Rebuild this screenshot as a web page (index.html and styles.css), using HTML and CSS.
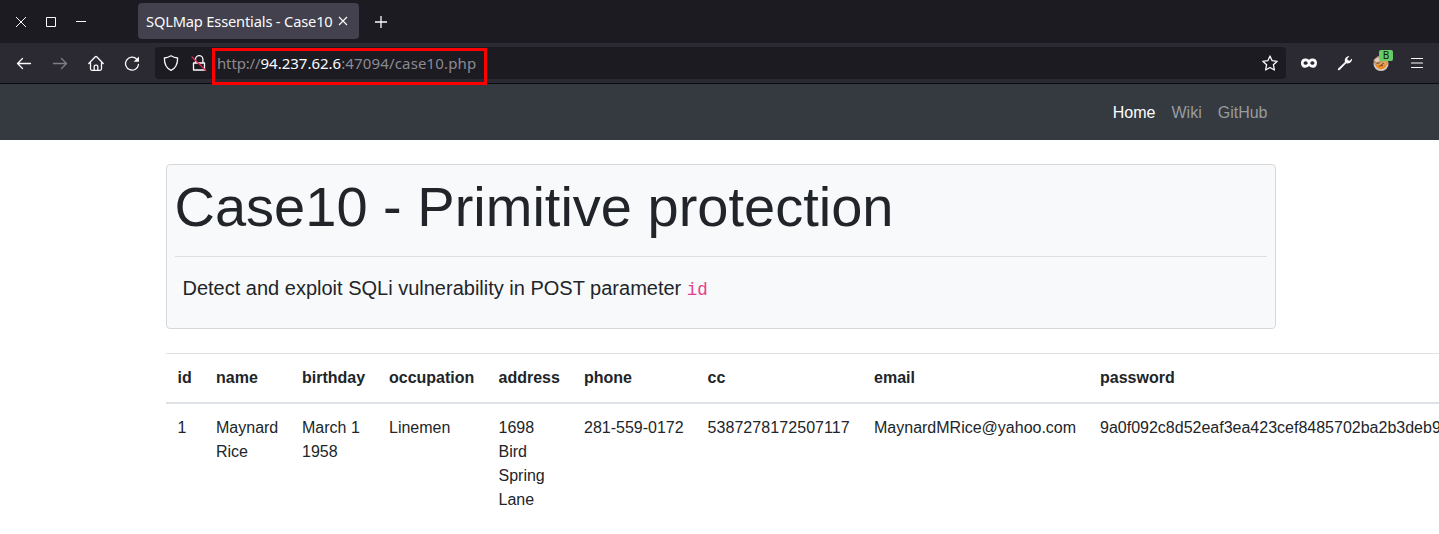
FILE: index.html
```html
<!DOCTYPE html>
<html lang="en">
<head>
<meta charset="utf-8">
<title>SQLMap Essentials - Case10</title>
<link rel="stylesheet" href="styles.css">
</head>
<body>
<header class="browser">
  <div class="titlebar">
    <div class="window-controls">
      <svg class="win-icon" viewBox="0 0 30 30"><path d="M10 10l10 10M20 10L10 20"/></svg>
      <svg class="win-icon" viewBox="0 0 30 30"><path d="M10.500 10.500h9v9h-9z"/></svg>
      <svg class="win-icon" viewBox="0 0 30 30"><path d="M10 14.500h10"/></svg>
    </div>
    <div class="tab">
      <span class="tab-title">SQLMap Essentials - Case10</span>
      <svg class="tab-close" viewBox="0 0 12 12"><path d="M2 2l8 8M10 2L2 10"/></svg>
    </div>
    <svg class="new-tab" viewBox="0 0 16 16"><path d="M8 2v12M2 8h12"/></svg>
  </div>
  <div class="toolbar">
    <div class="button"><svg class="icon" viewBox="0 0 16 16"><path d="M14.500 8.500H1.500M6.500 3.500l-5 5 5 5"/></svg></div>
    <div class="button dim"><svg class="icon" viewBox="0 0 16 16"><path d="M1.500 8.500h13M9.500 3.500l5 5-5 5"/></svg></div>
    <div class="button"><svg class="icon" viewBox="0 0 16 16"><path d="M.8 8.500L7.300 1.800q.7-.6 1.400 0L15.200 8.500M2.500 7.500v6.300q0 1.500 1.500 1.500h8q1.500 0 1.500-1.500V7.500M6.200 15.300v-4q0-1.200 1.200-1.200h1.200q1.200 0 1.200 1.200v4"/></svg></div>
    <div class="button"><svg class="icon" viewBox="0 0 16 16"><path d="M12.800 4.200A6.500 6.500 0 1 0 14.500 9.500"/><path class="solid" d="M15 1.500v5.300H9.700z"/></svg></div>
    <div class="urlbar">
      <div class="url-button"><svg class="icon" viewBox="0 0 16 16"><path d="M8 .8c2 1.300 4 2 6.600 2.200C14.700 8.500 13.500 12.800 8 15.300 2.500 12.800 1.300 8.500 1.400 3 4 2.800 6 2.100 8 .8z"/></svg></div>
      <div class="url-button"><svg class="icon" viewBox="0 0 16 16"><path d="M4.500 7.500V4.300a3.700 3.700 0 0 1 7.400 0v3.200M2.500 8h11v7h-11z"/><path class="strike" d="M1 2l13.800 13.500"/></svg></div>
      <div class="address"><span class="faint scheme">http://</span>94.237.62.6<span class="faint path">:47094/case10.php</span><span class="highlight"></span></div>
      <svg class="icon star" viewBox="0 0 16 16"><path d="M8 1l2.100 4.700 5.100.6-3.800 3.500 1 5.200L8 12.500 3.600 15l1-5.200L.8 6.300l5.100-.6z"/></svg>
    </div>
    <div class="button"><svg class="icon" viewBox="0 0 16 16"><path class="solid" fill-rule="evenodd" d="M0 7.800C0 3 5 2.500 8 4.800c3-2.300 8-1.800 8 3 0 6-5.300 6-8 3.300-2.700 2.700-8 2.700-8-3.300zm2.500.2c.5 2.300 3 2.300 4.300.2-1-2.400-3.300-2.400-4.300-.2zm6.700.2c1.300 2.100 3.800 2.100 4.300-.2-1-2.200-3.300-2.200-4.300.2z"/></svg></div>
    <div class="button"><svg class="icon" viewBox="0 0 16 16"><path class="solid" d="M1 13.700L8 7C7 3.500 9.500.8 12.500 1.200L10.300 3.500l.5 1.800 1.900.5 2.300-2.200c.4 3-2.200 5.600-5.800 4.600L2.600 15.100Q1.800 15.500 1.200 15 .6 14.400 1 13.700z"/></svg></div>
    <div class="button">
      <svg class="icon" viewBox="0 0 16 16"><circle cx="8" cy="8.500" r="7" fill="#e1a05a" stroke="#b8a28f"/><path fill="#f18a22" stroke="none" d="M2 9q6 3 12 0-1 5-6 5T2 9z"/><path fill="#e6cbb5" stroke="#9a7865" stroke-width=".7" d="M.7 5L5 1.800l3 1.500 5 .7-5 2.500-4.500 1z"/><path stroke="#6d4a37" stroke-width="1" d="M4 8.500l2-.5M8.500 9.500l2-1M6.500 11l3-.5"/><path stroke="#cfd4da" stroke-width="1.200" d="M1.500 10q2 5 6.500 5t6.500-5"/></svg>
      <span class="badge">B</span>
    </div>
    <div class="button"><svg class="icon thin" viewBox="0 0 16 16"><path d="M2.500 3.500h11M2.500 8h11M2.500 12.500h11"/></svg></div>
  </div>
</header>
<nav class="navbar">
  <a class="link active">Home</a><a class="link">Wiki</a><a class="link">GitHub</a>
</nav>
<main class="content">
  <section class="card">
    <h1 class="title">Case10 - Primitive protection</h1>
    <hr class="divider">
    <p class="lead">Detect and exploit SQLi vulnerability in POST parameter <code class="code">id</code></p>
  </section>
  <table class="table">
    <colgroup><col class="c-id"><col class="c-name"><col class="c-birthday"><col class="c-occupation"><col class="c-address"><col class="c-phone"><col class="c-cc"><col class="c-email"><col class="c-password"></colgroup>
    <thead><tr><th>id</th><th>name</th><th>birthday</th><th>occupation</th><th>address</th><th>phone</th><th>cc</th><th>email</th><th>password</th></tr></thead>
    <tbody><tr><td>1</td><td>Maynard Rice</td><td>March 1 1958</td><td>Linemen</td><td>1698 Bird Spring Lane</td><td class="nowrap">281-559-0172</td><td class="card-number">5387278172507117</td><td>MaynardMRice@yahoo.com</td><td class="nowrap">9a0f092c8d52eaf3ea423cef8485702ba2b3deb9</td></tr></tbody>
  </table>
</main>
</body>
</html>
```
FILE: styles.css
```css
* { box-sizing: border-box; }
body {
  margin: 0;
  height: 534px;
  overflow: hidden;
  background: #fff;
  color: #212529;
  font: 16px/24px "Liberation Sans", Arial, sans-serif;
}
svg { display: block; flex: none; fill: none; stroke: #fbfbfe; }

.browser { font-family: "Noto Sans", sans-serif; color: #fbfbfe; background: #1c1b22; }
.titlebar { height: 43px; display: flex; align-items: center; padding-left: 6px; }
.window-controls { display: flex; padding-right: 42px; }
.win-icon { width: 30px; height: 30px; stroke-width: 1; }
.tab {
  width: 221px;
  height: 36px;
  margin-bottom: 1px;
  padding: 0 10px 0 8px;
  display: flex;
  align-items: center;
  justify-content: space-between;
  border-radius: 4px;
  background: #42414d;
}
.tab-title { font-size: 14.67px; letter-spacing: -.17px; white-space: nowrap; }
.tab-close { width: 12px; height: 12px; stroke-width: 1.1; }
.new-tab { width: 16px; height: 16px; margin-left: 14px; stroke-width: 1.3; }

.toolbar {
  height: 41px;
  display: flex;
  align-items: center;
  padding: 0 4px 0 6px;
  background: #2b2a33;
  border-bottom: 1px solid #0c0c0d;
}
.button { position: relative; width: 36px; height: 36px; display: flex; align-items: center; justify-content: center; }
.dim { opacity: .4; }
.icon { width: 16px; height: 16px; stroke-width: 1.3; stroke-linejoin: round; stroke-linecap: round; }
.thin { stroke-width: 1.2; }
.solid { fill: #fbfbfe; stroke: none; }
.strike { stroke: #e22850; }
.urlbar {
  flex: 1;
  height: 32px;
  margin: 0 5px;
  padding: 0 8px 0 2px;
  display: flex;
  align-items: center;
  border-radius: 4px;
  background: #1c1b22;
}
.url-button { width: 28px; display: flex; justify-content: center; }
.address { position: relative; margin-left: 4px; font-size: 15px; white-space: nowrap; }
.faint { color: #8b8a91; }
.scheme { letter-spacing: -.15px; }
.path { letter-spacing: .15px; }
.highlight { position: absolute; left: -5px; top: -3px; width: 275px; height: 37px; border: 3px solid #f00; }
.star { margin-left: auto; }
.badge {
  position: absolute;
  left: 16px;
  top: 5px;
  width: 14px;
  height: 11px;
  border-radius: 2px;
  background: #66cc66;
  color: #101810;
  font: 10px/11px "Noto Sans", sans-serif;
  text-align: center;
}

.navbar {
  height: 56px;
  display: flex;
  align-items: center;
  justify-content: flex-end;
  gap: 16px;
  padding: 2px 171.500px 0 0;
  background: #343a40;
}
.link { color: #999c9f; }
.active { color: #fff; }

.content { padding: 24px 0 0 166px; }
.card {
  width: 1110px;
  height: 165px;
  padding: 8px;
  border: 1px solid #d7d8da;
  border-radius: 4px;
  background: #f8f9fa;
}
.title { margin: 0 0 0 -.5px; font-size: 56px; font-weight: 400; line-height: 67.200px; }
.divider { margin: 16px 0; border: 0; border-top: 1px solid #dedfe0; }
.lead { margin: 0; padding-left: 7.500px; font-size: 20px; line-height: 30px; }
.code { font: 17.500px "Liberation Mono", monospace; color: #e83e8c; }

.table { width: 1322px; margin-top: 24px; table-layout: fixed; border-spacing: 0; }
th, td { padding: 12px; text-align: left; vertical-align: top; }
th:first-child, td:first-child { padding-left: 11.500px; }
th { border-top: 1px solid #dee2e6; border-bottom: 2px solid #dee2e6; }
.nowrap { white-space: nowrap; }
.card-number { letter-spacing: .07px; }
.c-id { width: 38px; }
.c-name { width: 86px; }
.c-birthday { width: 87px; }
.c-occupation { width: 109.500px; }
.c-address { width: 85.500px; }
.c-phone { width: 123.500px; }
.c-cc { width: 166.500px; }
.c-email { width: 226px; }
.c-password { width: 400px; }
```
